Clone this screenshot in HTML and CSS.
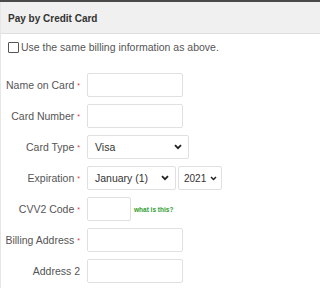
FILE: index.html
```html
<!DOCTYPE html>
<html>
<head>
<meta charset="utf-8">
<link rel="stylesheet" href="styles.css">
</head>
<body>
<div class="topbar"></div>
<div class="panel">
  <div class="header">Pay by Credit Card</div>
  <label class="same"><span class="box"></span>Use the same billing information as above.</label>
  <div class="form">
    <div class="row">
      <div class="label">Name on Card<span class="req">*</span></div>
      <div class="input w96"></div>
    </div>
    <div class="row">
      <div class="label">Card Number<span class="req">*</span></div>
      <div class="input w96"></div>
    </div>
    <div class="row">
      <div class="label">Card Type<span class="req">*</span></div>
      <div class="select w102"><span>Visa</span><svg class="chev" viewBox="0 0 8 6" width="8" height="6"><path d="M1 1.2 L4 4.2 L7 1.2" fill="none" stroke="#222" stroke-width="1.8"/></svg></div>
    </div>
    <div class="row">
      <div class="label">Expiration<span class="req">*</span></div>
      <div class="select w89"><span>January (1)</span><svg class="chev" viewBox="0 0 8 6" width="8" height="6"><path d="M1 1.2 L4 4.2 L7 1.2" fill="none" stroke="#222" stroke-width="1.8"/></svg></div>
      <div class="select w44 small gap2"><span>2021</span><svg class="chev" viewBox="0 0 8 6" width="7" height="5"><path d="M1 1.2 L4 4.2 L7 1.2" fill="none" stroke="#222" stroke-width="1.8"/></svg></div>
    </div>
    <div class="row">
      <div class="label">CVV2 Code<span class="req">*</span></div>
      <div class="input w44"></div>
      <a class="what">what is this?</a>
    </div>
    <div class="row">
      <div class="label">Billing Address<span class="req">*</span></div>
      <div class="input w96"></div>
    </div>
    <div class="row">
      <div class="label">Address 2</div>
      <div class="input w96"></div>
    </div>
  </div>
</div>
</body>
</html>
```
FILE: styles.css
```css
html, body {
  margin: 0;
  padding: 0;
  background: #fff;
  font-family: "Liberation Sans", Arial, sans-serif;
}
.topbar {
  height: 2px;
  background: #4a4a4a;
}
.panel {
  border-left: 1px solid #e6e6e6;
  height: 286px;
  box-sizing: border-box;
}
.header {
  height: 32px;
  box-sizing: border-box;
  background: #f0f0f0;
  border-bottom: 1px solid #dedede;
  padding-left: 7px;
  padding-top: 1px;
  display: flex;
  align-items: center;
  font-weight: bold;
  font-size: 10px;
  color: #333;
}
.same {
  display: flex;
  align-items: center;
  margin: 6px 0 0 7px;
  height: 14px;
  font-size: 10.5px;
  color: #555;
}
.box {
  width: 9px;
  height: 9px;
  border: 1px solid #555;
  border-radius: 1px;
  margin-right: 2px;
  flex: none;
}
.form {
  margin-top: 19px;
  display: flex;
  flex-direction: column;
  gap: 7px;
}
.row {
  display: flex;
  align-items: center;
  height: 24px;
}
.label {
  width: 79px;
  text-align: right;
  font-size: 10.5px;
  color: #555;
  margin-right: 7px;
  flex: none;
  white-space: nowrap;
}
.req {
  color: #d33;
  font-size: 7px;
  margin-left: 3px;
  vertical-align: 1px;
}
.input, .select {
  height: 24px;
  box-sizing: border-box;
  border: 1px solid #e0e0e0;
  border-radius: 2px;
  background: #fff;
  flex: none;
}
.select {
  display: flex;
  align-items: center;
  justify-content: space-between;
  padding: 0 6px 0 7px;
  font-size: 10.5px;
  color: #333;
}
.select.small {
  padding: 0 4px 0 5px;
  font-size: 10px;
}
.chev { flex: none; }
.w96 { width: 96px; }
.w102 { width: 102px; }
.w89 { width: 89px; }
.w44 { width: 44px; }
.gap2 { margin-left: 2px; }
.what {
  margin-left: 3px;
  font-size: 6.5px;
  font-weight: bold;
  color: #2e9e2e;
}
```
